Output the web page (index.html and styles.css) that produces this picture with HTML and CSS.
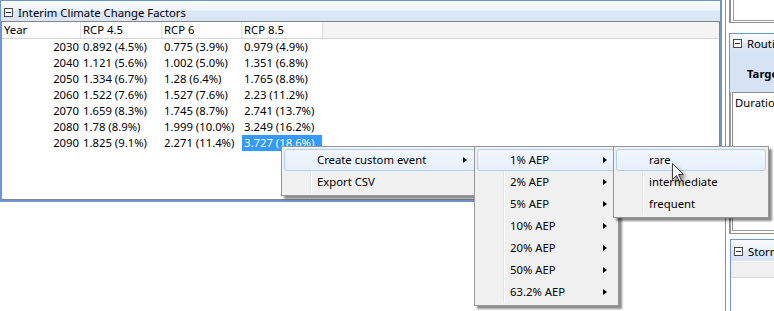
FILE: index.html
```html
<!DOCTYPE html>
<html>
<head>
<meta charset="utf-8">
<title>Interim Climate Change Factors</title>
<link rel="stylesheet" href="styles.css">
</head>
<body>
<div class="screen">
  <section class="panel main">
    <div class="ptitle"><span class="collapse"></span><span>Interim Climate Change Factors</span></div>
    <div class="grid">
      <div class="ghead">
        <div class="c c1">Year</div><div class="c c2">RCP 4.5</div><div class="c c3">RCP 6</div><div class="c c4">RCP 8.5</div><div class="fill"></div>
      </div>
      <div class="row"><div class="c c1 yr">2030</div><div class="c c2">0.892 (4.5%)</div><div class="c c3">0.775 (3.9%)</div><div class="c c4">0.979 (4.9%)</div></div>
      <div class="row"><div class="c c1 yr">2040</div><div class="c c2">1.121 (5.6%)</div><div class="c c3">1.002 (5.0%)</div><div class="c c4">1.351 (6.8%)</div></div>
      <div class="row"><div class="c c1 yr">2050</div><div class="c c2">1.334 (6.7%)</div><div class="c c3">1.28 (6.4%)</div><div class="c c4">1.765 (8.8%)</div></div>
      <div class="row"><div class="c c1 yr">2060</div><div class="c c2">1.522 (7.6%)</div><div class="c c3">1.527 (7.6%)</div><div class="c c4">2.23 (11.2%)</div></div>
      <div class="row"><div class="c c1 yr">2070</div><div class="c c2">1.659 (8.3%)</div><div class="c c3">1.745 (8.7%)</div><div class="c c4">2.741 (13.7%)</div></div>
      <div class="row"><div class="c c1 yr">2080</div><div class="c c2">1.78 (8.9%)</div><div class="c c3">1.999 (10.0%)</div><div class="c c4">3.249 (16.2%)</div></div>
      <div class="row"><div class="c c1 yr">2090</div><div class="c c2">1.825 (9.1%)</div><div class="c c3">2.271 (11.4%)</div><div class="c c4 sel">3.727 (18.6%)</div></div>
    </div>
  </section>

  <div class="right">
    <div class="tbox"><div class="tbox-mid"><div class="tbox-in"></div></div></div>
    <section class="rpanel routing">
      <div class="ptitle"><span class="collapse"></span><span>Routing</span></div>
      <div class="band">Target</div>
      <div class="dwrap"><div class="dbox"><div class="dhead">Duration</div></div></div>
    </section>
    <section class="rpanel storm">
      <div class="ptitle"><span class="collapse"></span><span>Storms</span></div>
      <div class="shead"></div>
    </section>
  </div>
</div>

<div class="menu m1">
  <div class="item hot">Create custom event<span class="arrow"></span></div>
  <div class="item">Export CSV</div>
</div>
<div class="menu m2">
  <div class="item hot">1% AEP<span class="arrow"></span></div>
  <div class="item">2% AEP<span class="arrow"></span></div>
  <div class="item">5% AEP<span class="arrow"></span></div>
  <div class="item">10% AEP<span class="arrow"></span></div>
  <div class="item">20% AEP<span class="arrow"></span></div>
  <div class="item">50% AEP<span class="arrow"></span></div>
  <div class="item">63.2% AEP<span class="arrow"></span></div>
</div>
<div class="menu m3">
  <div class="item hot">rare</div>
  <div class="item">intermediate</div>
  <div class="item">frequent</div>
</div>

<svg class="cursor" width="16" height="22" viewBox="0 0 16 22">
  <path d="M0.5 0.5 L0.5 16.5 L4.5 12.5 L7.5 18.5 L9.5 17.5 L6.5 11.5 L11.5 11.5 Z" fill="#ffffff" stroke="#222" stroke-width="1" stroke-linejoin="miter"/>
</svg>
</body>
</html>
```
FILE: styles.css
```css
* { box-sizing: border-box; }

body {
  margin: 0;
  width: 774px;
  height: 311px;
  overflow: hidden;
  position: relative;
  background: #ffffff;
  color: #000;
  font-family: "Noto Sans", "DejaVu Sans", sans-serif;
  font-size: 11.3px;
}

.screen {
  display: flex;
  height: 311px;
}

/* ---------- panels ---------- */
.panel.main {
  flex: none;
  width: 722px;
  height: 202px;
  border-style: solid;
  border-color: #6f95cf;
  border-width: 1px 2px 2px 1px;
  display: flex;
  flex-direction: column;
}

.ptitle {
  flex: none;
  height: 20px;
  display: flex;
  align-items: center;
  gap: 5px;
  padding: 2px 0 0 3px;
  white-space: nowrap;
  background: linear-gradient(#f8fafd 0%, #eef3fa 45%, #dce7f6 52%, #d9e5f5 100%);
}

.collapse {
  flex: none;
  width: 9px;
  height: 9px;
  border: 1px solid #4a4a4a;
  position: relative;
  background: #fff;
}
.collapse::after {
  content: "";
  position: absolute;
  left: 1px;
  right: 1px;
  top: 3px;
  height: 1px;
  background: #333;
}

/* ---------- grid ---------- */
.grid {
  flex: 1;
  border: 1px solid #858585;
  border-left-color: #6f95cf;
  background: #fff;
  overflow: hidden;
}

.ghead {
  display: flex;
  height: 17px;
  border-bottom: 1px solid #d5d5d5;
}
.ghead .c {
  background: linear-gradient(#ffffff, #fbfbfb);
  border-right: 1px solid #e2e2e2;
}
.ghead .fill {
  flex: 1;
  background: #f4f4f4;
  border-left: 1px solid #ededed;
}

.row {
  display: flex;
  height: 16px;
}

.c {
  flex: none;
  height: 100%;
  line-height: 16px;
  padding-left: 2px;
  white-space: nowrap;
  border-right: 1px solid transparent;
  background-clip: padding-box;
}
.c1 { width: 79px; }
.c2 { width: 81px; }
.c3 { width: 80px; }
.c4 { width: 81px; }
.c.yr { text-align: right; padding: 0 1px 0 0; }

.c.sel {
  background-color: #3399ff;
  color: #fff;
  outline: 1px dotted #d97a1c;
  outline-offset: -2px;
}

/* ---------- right column ---------- */
.right {
  flex: none;
  margin-left: 3px;
  border-left: 1px solid #6f95cf;
  padding-left: 3px;
  width: 52px;
  overflow: hidden;
  display: flex;
  flex-direction: column;
}
.right > * { width: 200px; flex: none; }

.tbox {
  height: 23px;
  border-left: 1px solid #6f95cf;
}
.tbox-mid {
  height: 100%;
  border-left: 1px solid #8e8e8e;
  border-bottom: 1px solid #8e8e8e;
  padding: 0 0 1px 2px;
}
.tbox-in {
  height: 100%;
  border-left: 1px solid #9c9c9c;
  border-bottom: 1px solid #9c9c9c;
}

.rpanel {
  border: 1px solid #6f95cf;
  border-right: none;
  display: flex;
  flex-direction: column;
}
.routing {
  margin-top: 10px;
  height: 201px;
  border-bottom: none;
}
.routing .ptitle { height: 18px; padding-top: 1px; }

.band {
  flex: none;
  height: 40px;
  background: #d5e3f5;
  font-weight: bold;
  padding: 15px 0 0 17px;
  line-height: 14px;
}

.dwrap {
  flex: 1;
  border-left: 1px solid #9a9a9a;
  border-bottom: 1px solid #8e8e8e;
  padding: 0 0 2px 1px;
  background: #fff;
}
.dbox {
  height: 100%;
  border-top: 1px solid #8e8e8e;
  border-left: 1px solid #8e8e8e;
  border-bottom: 1px solid #9c9c9c;
}
.dhead {
  padding: 3px 0 0 2px;
  line-height: 14px;
}

.storm {
  margin-top: 5px;
  flex: 1;
  margin-left: 1px;
  border-bottom: none;
}
.storm .ptitle { height: 21px; }
.shead {
  height: 16px;
  margin-top: 1px;
  background: #f1f1f1;
  border-bottom: 1px solid #d8d8d8;
  border-top: 1px solid #e8e8e8;
}

/* ---------- context menus ---------- */
.menu {
  position: absolute;
  background: #f0f0f0;
  border: 1px solid #979797;
  padding: 2px;
  box-shadow: 3px 3px 2px rgba(0, 0, 0, 0.45);
  z-index: 5;
}
.menu::before {
  content: "";
  position: absolute;
  top: 2px;
  bottom: 2px;
  left: 28px;
  width: 1px;
  background: #e2e3e3;
  box-shadow: 1px 0 0 #ffffff;
}
.m1 { left: 281px; top: 146px; width: 198px; z-index: 5; }
.m2 { left: 474px; top: 146px; width: 145px; z-index: 6; }
.m3 { left: 613px; top: 146px; width: 156px; z-index: 7; }

.item {
  position: relative;
  height: 22px;
  line-height: 20px;
  padding-left: 32px;
  border: 1px solid transparent;
  border-radius: 3px;
  white-space: nowrap;
}
.item.hot {
  border-color: #aecff7;
  background: linear-gradient(#f2f7fe, #e6effb);
}
.arrow {
  position: absolute;
  right: 8px;
  top: 7px;
  width: 0;
  height: 0;
  border-left: 4px solid #000;
  border-top: 3.5px solid transparent;
  border-bottom: 3.5px solid transparent;
}

/* ---------- mouse pointer ---------- */
.cursor {
  position: absolute;
  left: 672px;
  top: 163px;
  z-index: 10;
  opacity: 0.85;
  filter: drop-shadow(2px 3px 2px rgba(0, 0, 0, 0.55));
}
```
